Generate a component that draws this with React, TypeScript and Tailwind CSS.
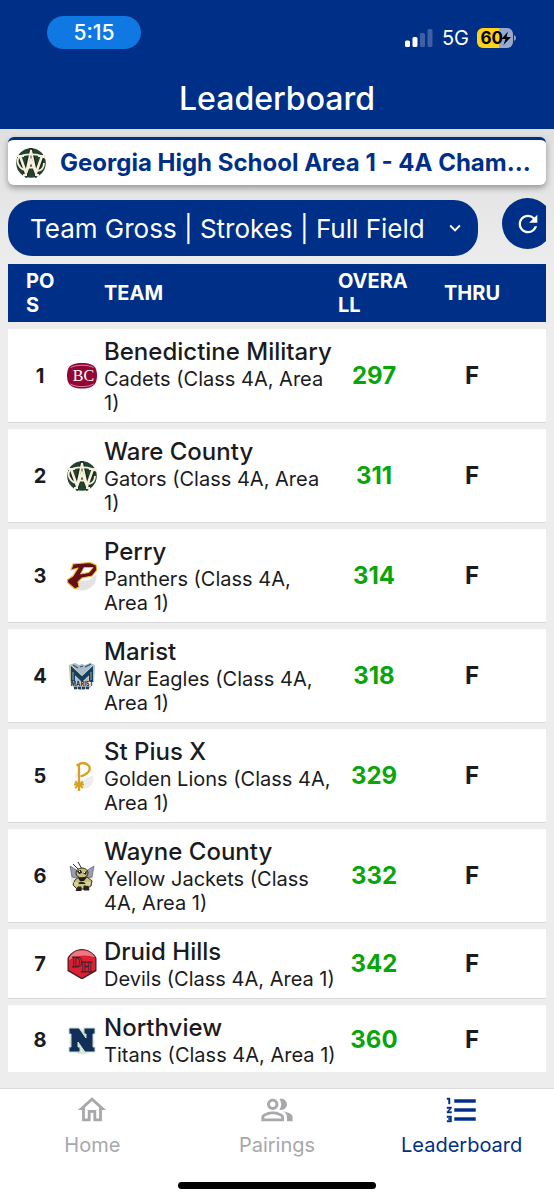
import type { ReactNode } from "react";
import { MdKeyboardArrowDown, MdOutlineHome, MdOutlinePeopleAlt, MdRefresh } from "react-icons/md";

type Team = {
  pos: number;
  name: string;
  detail: string;
  overall: number;
  thru: string;
  logo: ReactNode;
};

const serif = "'Liberation Serif', serif";

function Logo({ children, label }: { children: ReactNode; label: string }) {
  return (
    <svg viewBox="0 0 30 30" className="block size-[30px]" role="img" aria-label={label}>
      {children}
    </svg>
  );
}

function WareLogo() {
  return (
    <Logo label="Ware County">
      <circle cx="15" cy="15" r="14.800" fill="#24432f" />
      <g fill="none" strokeLinejoin="miter">
        <path d="M3 8 L10 25 L15 11 L20 25 L27 8 M9 26 L15 3 L21 26" stroke="#14281c" strokeWidth="4.500" />
        <g stroke="#f6f0dc">
          <path d="M29 10 C24 5.500 8 5 3 9 C0 13 2 19 8 22" strokeWidth="1.800" />
          <path d="M22 23 C26 22 28 19 28 15" strokeWidth="1.800" />
          <path d="M4 8 L10 25 L15 12 L20 25 L26 8" strokeWidth="2.600" />
          <path d="M9.500 27 L15 2 L20.500 27" strokeWidth="1.900" />
          <path d="M0 8 H8 M22 8 H30 M11 19.500 H19 M7 27 H11 M19 27 H23" strokeWidth="1.900" />
        </g>
      </g>
    </Logo>
  );
}

function BenedictineLogo() {
  return (
    <Logo label="Benedictine Military">
      <path
        d="M15 2 C22 2 26.500 3.500 28.500 7 C30.500 11 30.500 18 28.500 22 C26 26 22 27.500 15 27.500 C8 27.500 4 26 1.500 22 C-.5 18 -.5 11 1.500 7 C3.500 3.500 8 2 15 2Z"
        fill="#930633"
      />
      <path
        d="M3.500 6.500 C9 3.500 21 3.500 26.500 6.500 M3.500 23 C9 26.500 21 26.500 26.500 23"
        fill="none"
        stroke="#e9bccb"
        strokeWidth=".7"
      />
      <text x="16.500" y="20" textAnchor="middle" fontFamily={serif} fontSize="16" fill="#fff">
        BC
      </text>
    </Logo>
  );
}

function PerryLogo() {
  return (
    <Logo label="Perry">
      <circle cx="15" cy="15" r="14.500" fill="#e3e3e5" />
      <path d="M0 0H30V13L22 19L12 20L9 29L0 27Z" fill="#fff" />
      <g strokeLinejoin="round">
        <path
          d="M6 3 L23 1.500 L29 4 L30 9 L25 15 L15 17 L11 21 L12 26 L8 28 L1 22 L0 19 L6 15 L11 7 L4 9Z"
          fill="#641018"
          stroke="#eeb72c"
          strokeWidth="1.100"
        />
        <path d="M17 6.500 H26 L22 11.500 L13.500 13Z" fill="#fff" stroke="#eeb72c" strokeWidth="1" />
      </g>
    </Logo>
  );
}

function MaristLogo() {
  return (
    <Logo label="Marist">
      <path
        d="M2 4 L8 2 L12 4 L15 3 L18 4 L23 2 L28 4 L27 21 L23 27 L15 29 L7 27 L3 21Z"
        fill="#a9bccb"
      />
      <path d="M6 4 L11 7 M18 6 L24 3 M3 6 L7 8 M13 6 L16 5" stroke="#325673" strokeWidth="1.300" />
      <g fill="none" strokeLinejoin="miter">
        <path d="M6 20V9.500L15 18L24 9.500V20" stroke="#e4dfaa" strokeWidth="5.500" />
        <path d="M6 20V9.500L15 18L24 9.500V20" stroke="#153e67" strokeWidth="4.200" />
        <path d="M6 19V11M24 19V11" stroke="#c6c98e" strokeWidth=".8" />
      </g>
      <path d="M2 20.500H28V25H2Z" fill="#fff" />
      <text
        x="15"
        y="24.800"
        textAnchor="middle"
        fontFamily="Inter, sans-serif"
        fontWeight="900"
        fontSize="5.500"
        fill="#173b60"
      >
        MARIST
      </text>
      <path d="M7 27H23" stroke="#213c55" strokeWidth="2.500" strokeDasharray="3 1" />
    </Logo>
  );
}

function PiusLogo() {
  return (
    <Logo label="St Pius X">
      <circle cx="17" cy="18" r="9.500" fill="#ededef" />
      <path d="M12 14V4H28V13L16 19H7Z" fill="#fff" />
      <g fill="none" stroke="#d6a021" strokeWidth="2.300">
        <path d="M12 30V3" />
        <path d="M9.500 4.500 L15 2 C21 2 24 6 22 10 C20 13.500 17 14 13.500 15.500" />
        <path d="M8 20.500L16 27M16 20.500L8 27M7 23.500H17" strokeWidth="1.900" />
      </g>
    </Logo>
  );
}

function WayneLogo() {
  return (
    <Logo label="Wayne County">
      <circle cx="15" cy="18" r="11" fill="#e6e6e8" />
      <path d="M0 0H30V14H0Z" fill="#fff" />
      <path d="M3 5 L11 10 L10 17 L5 16Z M27 5 L19 10 L20 17 L25 16Z" fill="#9b9cae" stroke="#68697b" strokeWidth=".8" />
      <path d="M12 9 L6 3 M15 8 L11 1" stroke="#272820" strokeWidth="1" />
      <path d="M8 19 L12 16 H20 L25 20 L24 25 L19 28 H10 L6 24Z" fill="#c9c284" stroke="#383724" strokeWidth="1" />
      <ellipse cx="15" cy="12" rx="6" ry="5" fill="#c6c07a" stroke="#27281f" strokeWidth="1" />
      <path d="M10 10 L14 9 L15 12 L12 13Z M16 12 L20 10 L19 14Z M11 17 L20 16 L17 20 L13 20Z" fill="#1d1e19" />
      <path d="M10 23 L14 21 L20 23 M11 26H14V30H9ZM17 25H21L22 29H17Z" fill="#24251e" stroke="#24251e" strokeWidth="1" />
      <path d="M7 21 L12 22 L10 25 L7 24Z M18 21 L23 21 L23 24 L19 25Z" fill="#ddd391" />
      <path d="M12 10 L13 11 M17 12 L18 11" stroke="#fff" strokeWidth="1" />
    </Logo>
  );
}

function DruidLogo() {
  return (
    <Logo label="Druid Hills">
      <path d="M15 0 C21 0 27 4 29.500 9 V22 L15 30.500 L.5 22 V9 C3 4 9 0 15 0Z" fill="#3d2025" />
      <path d="M15 1.200 C21 1.200 26 4.500 28.300 9.500 V21 L15 29 L1.700 21 V9.500 C4 4.500 9 1.200 15 1.200Z" fill="#dc1f31" />
      <path d="M15 1.200 C21 1.200 26 4.500 28 8.500 C20 5 9 6 2 11 V9.500 C4 4.500 9 1.200 15 1.200Z" fill="#ef7880" />
      <text
        x="5"
        y="17.500"
        fontFamily={serif}
        fontWeight="700"
        fontSize="14"
        fill="#d3273a"
        stroke="#421e25"
        strokeWidth=".8"
      >
        D
        <tspan x="14" dy="5.500">
          H
        </tspan>
      </text>
    </Logo>
  );
}

function NorthviewLogo() {
  return (
    <Logo label="Northview">
      <circle cx="15" cy="17" r="12.500" fill="#dde6dd" />
      <path
        d="M2 3H12L19 13V9H17V3H28V9H26V22H28V27H18L11 17V22H13V27H2V22H4V9H2Z"
        fill="#112f59"
        stroke="#c9e3cc"
        strokeWidth="1"
      />
    </Logo>
  );
}

const teams: Team[] = [
  { pos: 1, name: "Benedictine Military", detail: "Cadets (Class 4A, Area 1)", overall: 297, thru: "F", logo: <BenedictineLogo /> },
  { pos: 2, name: "Ware County", detail: "Gators (Class 4A, Area 1)", overall: 311, thru: "F", logo: <WareLogo /> },
  { pos: 3, name: "Perry", detail: "Panthers (Class 4A, Area 1)", overall: 314, thru: "F", logo: <PerryLogo /> },
  { pos: 4, name: "Marist", detail: "War Eagles (Class 4A, Area 1)", overall: 318, thru: "F", logo: <MaristLogo /> },
  { pos: 5, name: "St Pius X", detail: "Golden Lions (Class 4A, Area 1)", overall: 329, thru: "F", logo: <PiusLogo /> },
  { pos: 6, name: "Wayne County", detail: "Yellow Jackets (Class 4A, Area 1)", overall: 332, thru: "F", logo: <WayneLogo /> },
  { pos: 7, name: "Druid Hills", detail: "Devils (Class 4A, Area 1)", overall: 342, thru: "F", logo: <DruidLogo /> },
  { pos: 8, name: "Northview", detail: "Titans (Class 4A, Area 1)", overall: 360, thru: "F", logo: <NorthviewLogo /> },
];

function StatusBar() {
  return (
    <div className="flex items-center justify-between pt-[15px] pr-[38px] pl-[47px] text-white">
      <time className="flex h-[33px] w-[94px] items-center justify-center rounded-full bg-[#1078e2] text-[21px] font-medium">
        5:15
      </time>
      <div className="flex items-center pt-[11px]">
        <svg viewBox="0 0 28 18" className="h-[18px] w-7" role="img" aria-label="Signal">
          <rect x="0" y="11.500" width="5" height="6.500" rx="1.500" fill="#fff" />
          <rect x="7.500" y="8" width="5" height="10" rx="1.500" fill="#fff" />
          <rect x="15" y="4" width="5" height="14" rx="1.500" fill="#3e5fa4" />
          <rect x="22.500" y="0" width="5" height="18" rx="1.500" fill="#3e5fa4" />
        </svg>
        <span className="ml-[9px] text-xl leading-6">5G</span>
        <svg viewBox="0 0 39 20" className="ml-2 h-5 w-[39px]" role="img" aria-label="Battery">
          <path d="M6 0H22V20H6A6 6 0 0 1 0 14V6A6 6 0 0 1 6 0Z" fill="#fdd31a" />
          <path d="M22 0H30A6 6 0 0 1 36 6V14A6 6 0 0 1 30 20H22Z" fill="#99a9ce" />
          <path d="M37 7Q39 8 39 10Q39 12 37 13Z" fill="#99a9ce" />
          <text x="3.500" y="16" fontFamily="Inter, sans-serif" fontWeight="700" fontSize="17" fill="#000">
            60
          </text>
          <path d="M31 3.500L24.500 11H28.500L26.500 17L34 9H29.500Z" fill="#000" />
        </svg>
      </div>
    </div>
  );
}

function NumberedListIcon() {
  return (
    <svg viewBox="0 0 24 24" className="size-9" aria-hidden="true">
      <path
        d="M2 17h2v.5H3v1h1v.5H2v1h3v-4H2v1zm1-9h1V4H2v1h1v3zm-1 3h1.800L2 13.100v.9h3v-1H3.200L5 10.900V10H2v1zm5-6v2h14V5H7zm0 14h14v-2H7v2zm0-6h14v-2H7v2z"
        fill="currentColor"
        stroke="currentColor"
        strokeWidth=".3"
      />
    </svg>
  );
}

function TabBar() {
  const tabs = [
    { label: "Home", icon: <MdOutlineHome className="size-[34px]" />, active: false },
    { label: "Pairings", icon: <MdOutlinePeopleAlt className="size-[34px]" />, active: false },
    { label: "Leaderboard", icon: <NumberedListIcon />, active: true },
  ];
  return (
    <nav className="border-t border-[#dcdcde] bg-white pb-[11px]">
      <ul className="grid grid-cols-3">
        {tabs.map((tab) => (
          <li key={tab.label}>
            <a
              href="#"
              aria-current={tab.active ? "page" : undefined}
              className={
                tab.active
                  ? "flex flex-col items-center pt-[3px] text-[#002f87]"
                  : "flex flex-col items-center pt-[3px] text-[#a8a8ab]"
              }
            >
              <span className="flex h-9 items-center">{tab.icon}</span>
              <span className="mt-[5px] text-xl leading-6">{tab.label}</span>
            </a>
          </li>
        ))}
      </ul>
      <div className="mx-auto mt-[25px] h-[7px] w-[198px] rounded-full bg-black" />
    </nav>
  );
}

export default function App() {
  return (
    <div className="flex h-screen flex-col overflow-hidden bg-[#ededed] font-[Inter,sans-serif] text-[#1b1b1e]">
      <header className="shrink-0 bg-[#002f87] pb-2.5">
        <StatusBar />
        <h1 className="mt-[29px] text-center text-[32px] leading-10 font-medium text-white">Leaderboard</h1>
      </header>

      <main className="flex min-h-0 flex-1 flex-col bg-linear-to-b from-[#e0e0e1] to-[#ededed] to-15% px-2 pt-2 pb-4">
        <section className="flex h-12 shrink-0 items-center rounded-md border-t-3 border-[#002f87] bg-white pr-3 pl-2 shadow-[0_3px_6px_rgba(0,0,0,0.35)]">
          <WareLogo />
          <h2 className="ml-[14px] min-w-0 flex-1 truncate text-2xl leading-8 font-bold text-[#002f87]">
            Georgia High School Area 1 - 4A Championship
          </h2>
        </section>

        <div className="mt-[13px] flex shrink-0 items-start gap-6 overflow-hidden">
          <div className="relative mt-0.5 min-w-0 flex-1">
            <select
              aria-label="Leaderboard view"
              className="block h-14 w-full appearance-none rounded-[24px] bg-[#002f87] pr-10 pl-[22px] text-[26px] text-white"
            >
              <option>Team Gross | Strokes | Full Field</option>
            </select>
            <MdKeyboardArrowDown className="pointer-events-none absolute top-[17px] right-3 size-[22px] text-white" />
          </div>
          <button
            type="button"
            aria-label="Refresh"
            className="-mr-[7px] flex size-[51px] shrink-0 items-center justify-center rounded-full bg-[#002f87] text-white"
          >
            <MdRefresh className="size-7" />
          </button>
        </div>

        <div className="mt-px min-h-0 flex-1 overflow-y-auto [scrollbar-width:none]">
          <table className="w-full table-fixed border-separate border-spacing-x-0 border-spacing-y-[7px]">
            <colgroup>
              <col className="w-[59px]" />
              <col className="w-[30px]" />
              <col />
              <col className="w-[72px]" />
              <col className="w-[136px]" />
            </colgroup>
            <thead>
              <tr className="bg-[#002f87] text-left text-xl leading-6 text-white">
                <th scope="col" className="py-[5px] pr-2 pl-[18px] break-all">
                  POS
                </th>
                <th scope="col" colSpan={2} className="pl-[37px]">
                  TEAM
                </th>
                <th scope="col" className="break-all">
                  OVERALL
                </th>
                <th scope="col" className="pr-3 text-center">
                  THRU
                </th>
              </tr>
            </thead>
            <tbody>
              {teams.map((team) => (
                <tr key={team.pos} className="bg-white shadow-[0_1px_0_#d9d9db]">
                  <td className="pl-[5px] text-center text-xl font-bold">{team.pos}</td>
                  <td>{team.logo}</td>
                  <td className="pt-2 pb-[7px] pl-[7px]">
                    <div className="text-2xl leading-[30px] font-medium whitespace-nowrap">{team.name}</div>
                    <div className="text-xl leading-6">{team.detail}</div>
                  </td>
                  <td className="text-center text-2xl font-bold text-[#08a50b]">{team.overall}</td>
                  <td className="pr-3 text-center text-2xl font-bold">{team.thru}</td>
                </tr>
              ))}
            </tbody>
          </table>
        </div>
      </main>

      <TabBar />
    </div>
  );
}
